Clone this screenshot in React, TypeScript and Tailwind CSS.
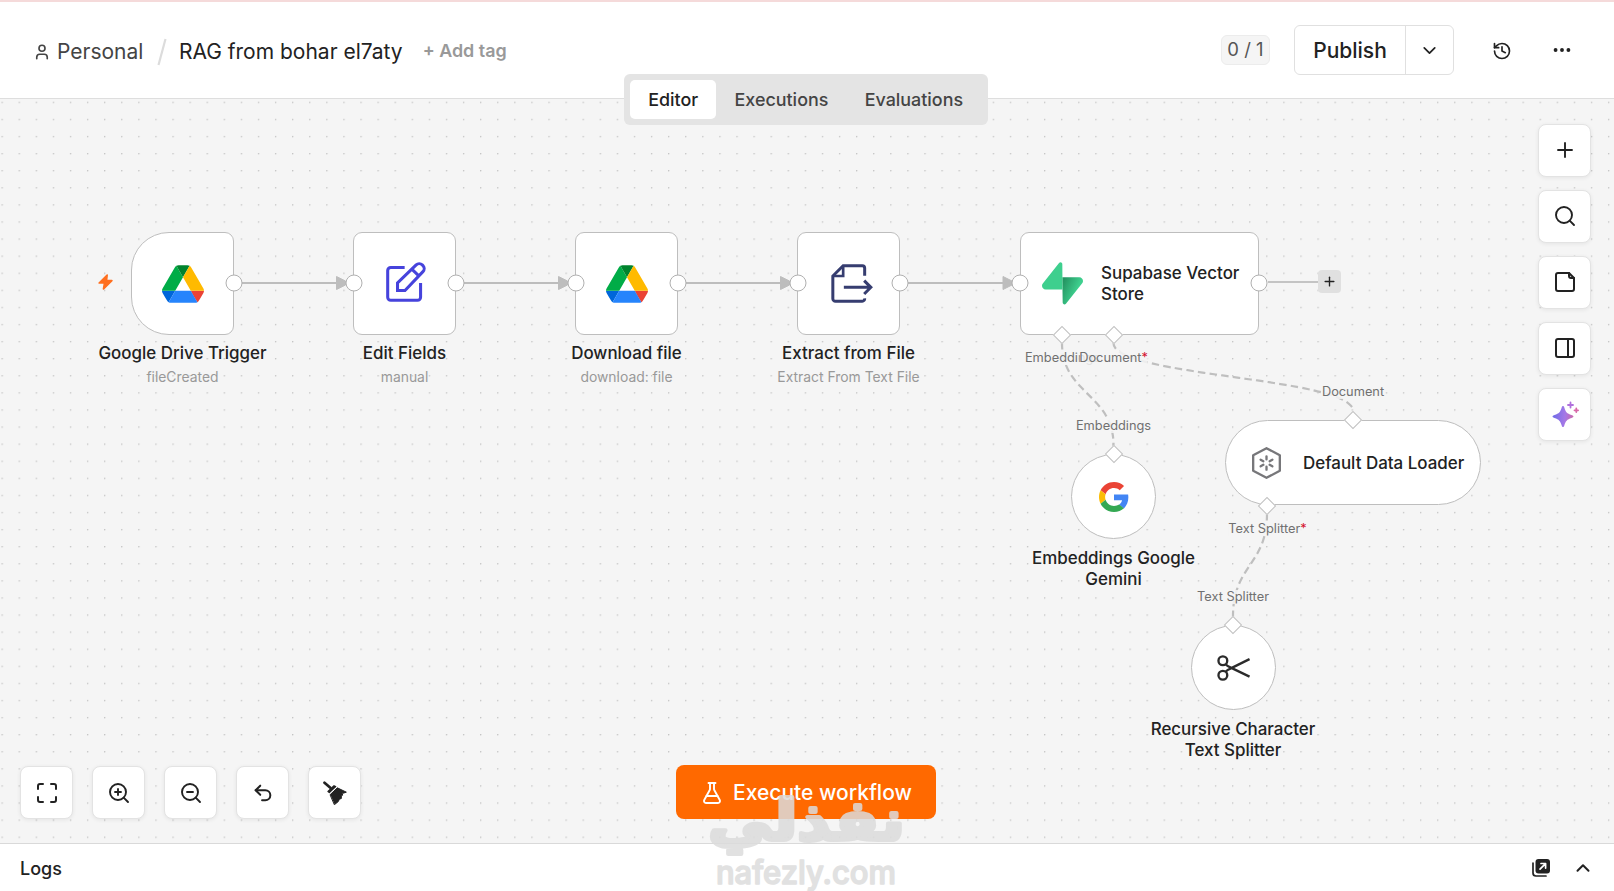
import type { ReactNode } from 'react';
import {
  ChevronDown,
  ChevronUp,
  Ellipsis,
  FlaskConical,
  History,
  Maximize,
  PanelRight,
  Plus,
  Search,
  Undo2,
  User,
  ZoomIn,
  ZoomOut,
} from 'lucide-react';

const TABS = [
  { label: 'Editor', active: true },
  { label: 'Executions', active: false },
  { label: 'Evaluations', active: false },
];

// Canvas positions are measured from the canvas' top left corner
const STEPS = [
  { name: 'Google Drive Trigger', sub: 'fileCreated', x: 131, icon: <DriveIcon />, trigger: true },
  { name: 'Edit Fields', sub: 'manual', x: 353, icon: <EditIcon />, trigger: false },
  { name: 'Download file', sub: 'download: file', x: 575, icon: <DriveIcon />, trigger: false },
  { name: 'Extract from File', sub: 'Extract From Text File', x: 797, icon: <ExtractIcon />, trigger: false },
];

const ARROWS = [241.5, 463.5, 685.5, 908];

const HANDLES = [233.5, 353.5, 455.5, 575.5, 677.5, 797.5, 900, 1019.5, 1259];

const DIAMONDS = [
  { x: 1062, y: 235.5 },
  { x: 1113.5, y: 235.5 },
  { x: 1113.5, y: 355 },
  { x: 1353, y: 321 },
  { x: 1267, y: 406.5 },
  { x: 1233, y: 526 },
];

const PORT_LABELS = [
  { text: 'Embeddings', x: 1062.5, y: 259, required: false },
  { text: 'Document', x: 1113.5, y: 259, required: true },
  { text: 'Embeddings', x: 1113.5, y: 327, required: false },
  { text: 'Document', x: 1353, y: 293, required: false },
  { text: 'Text Splitter', x: 1267.5, y: 430, required: true },
  { text: 'Text Splitter', x: 1233, y: 498, required: false },
];

function DriveIcon() {
  return (
    <svg viewBox="0 0 87.3 78" className="w-[42px] h-[38px]">
      <path fill="#0066da" d="m6.6 66.85 3.85 6.65c.8 1.4 1.95 2.5 3.3 3.3l13.75-23.8h-27.5c0 1.55.4 3.1 1.2 4.5z" />
      <path fill="#00ac47" d="m43.65 25-13.75-23.8c-1.35.8-2.5 1.9-3.3 3.3l-25.4 44a9.06 9.06 0 0 0 -1.2 4.5h27.5z" />
      <path fill="#ea4335" d="m73.55 76.8c1.35-.8 2.5-1.9 3.3-3.3l1.6-2.75 7.65-13.25c.8-1.4 1.2-2.95 1.2-4.5h-27.502l5.852 11.5z" />
      <path fill="#00832d" d="m43.65 25 13.75-23.8c-1.35-.8-2.9-1.2-4.5-1.2h-18.5c-1.6 0-3.15.45-4.5 1.2z" />
      <path fill="#2684fc" d="m59.8 53h-32.3l-13.75 23.8c1.35.8 2.9 1.2 4.5 1.2h50.8c1.6 0 3.15-.45 4.5-1.2z" />
      <path fill="#ffba00" d="m73.4 26.5-12.7-22c-.8-1.4-1.95-2.5-3.3-3.3l-13.75 23.8 16.15 28h27.45c0-1.55-.4-3.1-1.2-4.5z" />
    </svg>
  );
}

function EditIcon() {
  return (
    <svg viewBox="0 0 118 118" className="w-10 h-10 mb-[3px] ml-0.5" fill="none" stroke="#4643dc" strokeWidth="9" strokeLinejoin="round">
      <path d="M55 16H14a9 9 0 0 0-9 9v79a9 9 0 0 0 9 9h79a9 9 0 0 0 9-9V62" />
      <path strokeLinejoin="miter" d="M34 84V62L89 8.500a13 13 0 0 1 18 0l2 2a13 13 0 0 1 0 18L56 84Z" />
      <path d="M76 21l21 20" />
    </svg>
  );
}

function ExtractIcon() {
  return (
    <svg viewBox="0 0 125 117" className="w-[42px] h-[39px] ml-[7px]" fill="none" stroke="#363d70" strokeWidth="9">
      <path d="M100.500 35V12a7 7 0 0 0-7-7H36L5 36v68a8 8 0 0 0 8 8h80a8 8 0 0 0 7.500-9" />
      <path strokeWidth="8" d="M36 6v30H6" />
      <path d="M38 70h80M99 50l20 20-20 20" />
    </svg>
  );
}

function SupabaseIcon() {
  return (
    <svg viewBox="0 0 109 113" className="w-[41px] h-[43px] shrink-0">
      <defs>
        <linearGradient id="supa" x1="54" y1="55" x2="94" y2="72" gradientUnits="userSpaceOnUse">
          <stop stopColor="#249361" />
          <stop offset="1" stopColor="#3ECF8E" />
        </linearGradient>
      </defs>
      <path fill="url(#supa)" d="M63.708 110.284C60.848 113.885 55.05 111.912 54.981 107.314L53.974 40.063H99.194C107.384 40.063 111.952 49.523 106.859 55.937L63.708 110.284Z" />
      <path fill="#3ECF8E" d="M45.317 2.071C48.177-1.53 53.975.443 54.043 5.041L54.485 72.292H9.831C1.64 72.292-2.928 62.832 2.166 56.418L45.317 2.071Z" />
    </svg>
  );
}

function GoogleIcon() {
  return (
    <svg viewBox="0 0 48 48" className="w-[30px] h-[30px]">
      <path fill="#EA4335" d="M24 9.500c3.540 0 6.710 1.220 9.210 3.600l6.850-6.850C35.900 2.380 30.470 0 24 0 14.620 0 6.510 5.380 2.560 13.220l7.980 6.190C12.430 13.720 17.740 9.500 24 9.500z" />
      <path fill="#4285F4" d="M46.980 24.550c0-1.570-.150-3.090-.380-4.550H24v9.020h12.940c-.580 2.960-2.260 5.480-4.780 7.180l7.730 6c4.510-4.180 7.090-10.360 7.090-17.650z" />
      <path fill="#FBBC05" d="M10.530 28.590c-.480-1.450-.760-2.990-.760-4.590s.270-3.140.760-4.590l-7.980-6.190C.920 16.460 0 20.120 0 24c0 3.880.920 7.540 2.560 10.780l7.970-6.190z" />
      <path fill="#34A853" d="M24 48c6.480 0 11.930-2.130 15.890-5.810l-7.730-6c-2.150 1.450-4.920 2.300-8.160 2.300-6.260 0-11.570-4.220-13.470-9.910l-7.980 6.190C6.510 42.620 14.620 48 24 48z" />
    </svg>
  );
}

function LoaderIcon() {
  return (
    <svg viewBox="0 0 87 96" className="w-[29px] h-8 shrink-0" fill="none" stroke="#77777a" strokeWidth="7" strokeLinejoin="round">
      <path d="M43.500 3.500 83.500 25v46l-40 21.500L3.500 71V25Z" />
      <path strokeLinecap="round" d="M43.500 28v9M43.500 59v9M26 38l8 4.500M53 53.500l8 4.500M61 38l-8 4.500M34 53.500 26 58" />
    </svg>
  );
}

function ScissorsIcon() {
  return (
    <svg viewBox="0 0 97 77" className="w-[33px] h-[26px]" fill="none" stroke="#2b2b2b" strokeWidth="7">
      <circle cx="17" cy="17" r="13" />
      <circle cx="17" cy="60" r="13" />
      <path d="M25 27c4 5 8 7 14 9.500L96 64M25 50c4-5 8-7 14-9.500L96 12" />
    </svg>
  );
}

function NoteIcon() {
  return (
    <svg viewBox="0 0 24 24" className="w-6 h-6" fill="none" stroke="currentColor" strokeWidth="2" strokeLinecap="round" strokeLinejoin="round">
      <path d="M16 3H5a2 2 0 0 0-2 2v14a2 2 0 0 0 2 2h14a2 2 0 0 0 2-2V8Z" />
      <path d="M16 3v3a2 2 0 0 0 2 2h3" />
    </svg>
  );
}

function SparkleIcon() {
  return (
    <svg viewBox="0 0 28 28" className="w-7 h-7 mt-px">
      <defs>
        <linearGradient id="spark" x1="1" y1="14" x2="27" y2="16" gradientUnits="userSpaceOnUse">
          <stop stopColor="#6b6be8" />
          <stop offset="0.500" stopColor="#a578e6" />
          <stop offset="1" stopColor="#e0628a" />
        </linearGradient>
      </defs>
      <path
        fill="url(#spark)"
        d="M12 5c.7 0 1 .5 1.300 1.500 1.300 4.500 2.700 6 7.200 7.500 2.700.9 2.700 2 0 3-4.500 1.500-5.900 3-7.200 7.500-.6 2-2 2-2.600 0C9.400 20 8 18.500 3.500 17c-2.700-1-2.700-2.100 0-3 4.500-1.500 5.900-3 7.200-7.500C11 5.500 11.300 5 12 5Z"
      />
      <path fill="none" stroke="#b070dc" strokeWidth="1.800" strokeLinecap="round" d="M19.500 1.500v5M17 4h5" />
      <path fill="none" stroke="#d868a8" strokeWidth="1.800" strokeLinecap="round" d="M25.300 7.500v3.600M23.500 9.300h3.600" />
    </svg>
  );
}

function BroomIcon() {
  return (
    <svg viewBox="0 0 72 71" className="w-6 h-6" fill="#222" stroke="#222" strokeLinejoin="round" strokeLinecap="round">
      <path fill="none" strokeWidth="8" d="M4.500 4.500 22 20" />
      <path strokeWidth="4" d="M15 31l18-17 5 2-19 18Z" />
      <path strokeWidth="3" d="M22 40 43 20l27 13-9 3-4-2 2 8-4 2v8l-6 2-3 7-11 9Z" />
    </svg>
  );
}

function ToolButton({ children }: { children: ReactNode }) {
  return (
    <button className="w-[53px] h-[53px] flex items-center justify-center rounded-lg bg-white border border-[#e3e3e3] shadow-[0_1px_4px_rgba(0,0,0,0.07)] text-[#222]">
      {children}
    </button>
  );
}

function Header() {
  return (
    <header className="h-[99px] shrink-0 flex items-center justify-between bg-white border-t-2 border-t-[#f5dada] border-b border-b-[#dedede] pl-[33px] pr-[41px]">
      <div className="flex items-center pt-[3px]">
        <User size={18} strokeWidth={2.200} className="text-[#444] mt-px" />
        <span className="ml-1.5 text-[21px] text-[#444]">Personal</span>
        <svg viewBox="0 0 10 28" className="w-2.5 h-7 ml-3.5">
          <path d="M8.500 1 1.500 27" stroke="#dcdcdc" strokeWidth="2.200" />
        </svg>
        <span className="ml-[11.500px] pt-px text-[21px] text-[#222]">RAG from bohar el7aty</span>
        <span className="ml-5 text-[17.900px] font-semibold text-[#999]">+ Add tag</span>
      </div>
      <div className="flex items-center text-[#222]">
        <span className="w-[49px] h-[30px] flex items-center justify-center rounded-md bg-[#f5f5f5] border border-[#ececec] text-[18.500px] text-[#555]">
          0 / 1
        </span>
        <div className="ml-6 h-[50px] w-40 flex rounded-md border border-[#e0e0e0]">
          <button className="w-[111px] pt-0.5 text-[21px] font-medium border-r border-[#e0e0e0]">Publish</button>
          <button className="flex-1 flex items-center justify-center">
            <ChevronDown size={21} />
          </button>
        </div>
        <History size={20} className="ml-[38px] mt-px" />
        <Ellipsis size={22} strokeWidth={2.200} className="ml-[39px]" />
      </div>
    </header>
  );
}

function Edges() {
  return (
    <svg className="absolute inset-0 w-full h-full" fill="none">
      <defs>
        <pattern id="dots" x="1.500" y="2.700" width="17.090" height="17.090" patternUnits="userSpaceOnUse">
          <circle cx="0.700" cy="0.700" r="0.700" fill="#b8b8b8" />
        </pattern>
      </defs>
      <rect width="100%" height="100%" fill="url(#dots)" />
      {ARROWS.map(x => (
        <g key={x}>
          <path d={`M${x} 184H${x + 97}`} stroke="#bdbdbd" strokeWidth="2" />
          <path d={`M${x + 95} 177.500v13l9-4.500v-4Z`} fill="#bdbdbd" stroke="#bdbdbd" strokeLinejoin="round" />
        </g>
      ))}
      <path d="M1268 183h51" stroke="#c4c4c4" strokeWidth="2.200" />
      <g stroke="#bfbfbf" strokeWidth="2.200" strokeLinecap="square" strokeDasharray="5.300 6.400">
        <path d="M1062 244C1062 295 1113.500 295 1113.500 346" />
        <path d="M1113.500 244C1113.500 278 1353 278 1353 312" />
        <path d="M1267 415C1267 466 1233 466 1233 517" />
      </g>
    </svg>
  );
}

function Canvas() {
  return (
    <main className="flex-1 relative overflow-hidden bg-[#f5f5f5] text-[#222]">
      <Edges />

      {/* Main chain */}
      {STEPS.map(s => (
        <div key={s.name} className="absolute top-[133px] w-[103px] flex flex-col items-center" style={{ left: s.x }}>
          <div
            className={`w-[103px] h-[103px] shrink-0 flex items-center justify-center bg-white border border-[#bebebe] ${
              s.trigger ? 'rounded-[9px] rounded-l-[38px]' : 'rounded-[9px]'
            }`}
          >
            {s.icon}
          </div>
          <p className="mt-2 text-[16.950px] leading-[21px] font-medium whitespace-nowrap">{s.name}</p>
          <p className="mt-1 text-[13.900px] leading-[18px] text-[#999] whitespace-nowrap">{s.sub}</p>
        </div>
      ))}
      <svg viewBox="0 0 44 48" className="absolute left-[98px] top-[174.500px] w-[15px] h-4">
        <path d="M27 3 3 27h16l-3 18 25-25H25Z" fill="#ff6f1f" stroke="#ff6f1f" strokeWidth="5" strokeLinejoin="round" />
      </svg>

      {/* Vector store */}
      <div className="absolute left-[1020px] top-[133px] w-[239px] h-[103px] flex items-center gap-[18px] pl-[21px] bg-white border border-[#bebebe] rounded-[9px]">
        <SupabaseIcon />
        <span className="text-[16.950px] leading-[21px] font-medium">Supabase Vector Store</span>
      </div>
      <div className="absolute left-[1318px] top-[171px] w-[23px] h-[23px] flex items-center justify-center rounded bg-[#e0e0e0]">
        <Plus size={15} strokeWidth={2.200} />
      </div>

      {/* Sub nodes */}
      <div className="absolute left-[1013px] top-[355px] w-[201px] flex flex-col items-center">
        <div className="w-[85px] h-[85px] flex items-center justify-center rounded-full bg-white border border-[#bebebe]">
          <GoogleIcon />
        </div>
        <p className="mt-[9px] w-[180px] text-center text-[16.950px] leading-[21px] font-medium">Embeddings Google Gemini</p>
      </div>
      <div className="absolute left-[1225px] top-[321px] w-64 h-[85px] flex items-center gap-[22px] pl-[26px] rounded-full bg-white border border-[#bebebe]">
        <LoaderIcon />
        <span className="pt-0.5 text-[16.950px] font-medium whitespace-nowrap">Default Data Loader</span>
      </div>
      <div className="absolute left-[1133px] top-[526px] w-[200px] flex flex-col items-center">
        <div className="w-[85px] h-[85px] flex items-center justify-center rounded-full bg-white border border-[#bebebe]">
          <ScissorsIcon />
        </div>
        <p className="mt-[9px] w-[180px] text-center text-[16.950px] leading-[21px] font-medium">Recursive Character Text Splitter</p>
      </div>

      {/* Ports */}
      {HANDLES.map(x => (
        <span
          key={x}
          className="absolute top-[184px] w-[17px] h-[17px] -translate-x-1/2 -translate-y-1/2 rounded-full bg-white border border-[#b0b0b0]"
          style={{ left: x }}
        />
      ))}
      {DIAMONDS.map(d => (
        <span
          key={`${d.x}-${d.y}`}
          className="absolute w-[13px] h-[13px] -translate-x-1/2 -translate-y-1/2 rotate-45 bg-white border border-[#c0c0c0]"
          style={{ left: d.x, top: d.y }}
        />
      ))}
      {PORT_LABELS.map(l => (
        <span
          key={`${l.x}-${l.y}`}
          className="absolute -translate-x-1/2 -translate-y-1/2 bg-[#f5f5f5]/85 text-[12.800px] leading-[14px] text-[#707070] whitespace-nowrap"
          style={{ left: l.x, top: l.y }}
        >
          {l.text}
          {l.required && <span className="text-[#d4102d]">*</span>}
        </span>
      ))}

      {/* Side tools */}
      <div className="absolute right-[23px] top-[24.500px] flex flex-col gap-[13px]">
        <ToolButton><Plus size={24} strokeWidth={1.900} /></ToolButton>
        <ToolButton><Search size={24} strokeWidth={1.900} /></ToolButton>
        <ToolButton><NoteIcon /></ToolButton>
        <ToolButton><PanelRight size={24} /></ToolButton>
        <ToolButton><SparkleIcon /></ToolButton>
      </div>

      {/* View controls */}
      <div className="absolute left-5 bottom-[24px] flex gap-[19px]">
        <ToolButton><Maximize size={24} /></ToolButton>
        <ToolButton><ZoomIn size={24} strokeWidth={1.900} /></ToolButton>
        <ToolButton><ZoomOut size={24} strokeWidth={1.900} /></ToolButton>
        <ToolButton><Undo2 size={22} strokeWidth={2.200} /></ToolButton>
        <ToolButton><BroomIcon /></ToolButton>
      </div>

      <button className="absolute left-[676px] bottom-[24px] w-[260px] h-[54px] flex items-center justify-center gap-[9px] pt-px rounded-lg bg-[#ff6900] text-white text-[21px] font-medium">
        <FlaskConical size={24} strokeWidth={1.900} />
        Execute workflow
      </button>
    </main>
  );
}

function Tabs() {
  return (
    <nav className="absolute left-[624px] top-[73.500px] h-[51px] w-[364px] flex items-center p-1.5 rounded-md bg-[#e4e4e4] text-[17.900px] font-medium">
      {TABS.map(t => (
        <button
          key={t.label}
          className={`h-[39px] px-[18.200px] pt-[3px] rounded-[5px] ${t.active ? 'bg-white text-[#222]' : 'text-[#444]'}`}
        >
          {t.label}
        </button>
      ))}
    </nav>
  );
}

function LogsBar() {
  return (
    <footer className="h-12 shrink-0 flex items-center justify-between pl-5 pr-5 bg-white border-t border-[#d9d9d9] text-[#222]">
      <span className="pt-px text-[18px] font-medium">Logs</span>
      <div className="flex items-center gap-[21px]">
        <svg viewBox="0 0 20 20" className="w-5 h-5" fill="none" strokeLinecap="round" strokeLinejoin="round">
          <path d="M2 5v10a3 3 0 0 0 3 3h10" stroke="#222" strokeWidth="1.700" />
          <rect x="4.500" y="1" width="14.500" height="14.500" rx="3" fill="#222" />
          <path d="M9 11.200 14.300 5.800M10 5.500h4.600v4.600" stroke="#fff" strokeWidth="1.700" />
        </svg>
        <ChevronUp size={22} strokeWidth={2.200} />
      </div>
    </footer>
  );
}

function Watermark() {
  return (
    <svg className="absolute left-[700px] top-[780px] w-[214px] h-[111px] pointer-events-none" opacity="0.85">
      <g fill="#dcdcdc" stroke="#dcdcdc" strokeLinejoin="round">
        <text x="205" y="60" direction="rtl" textLength="197" lengthAdjust="spacingAndGlyphs" strokeWidth="4" className="font-['DejaVu_Sans',sans-serif] font-bold text-[56px]">
          نفذلي
        </text>
        <text x="16" y="104" textLength="180" lengthAdjust="spacingAndGlyphs" strokeWidth="1.500" className="font-['Inter',sans-serif] font-medium text-[32px]">
          nafezly.com
        </text>
      </g>
    </svg>
  );
}

export default function App() {
  return (
    <div className="relative h-screen flex flex-col overflow-hidden font-['Inter',sans-serif]">
      <Header />
      <Canvas />
      <LogsBar />
      <Tabs />
      <Watermark />
    </div>
  );
}
